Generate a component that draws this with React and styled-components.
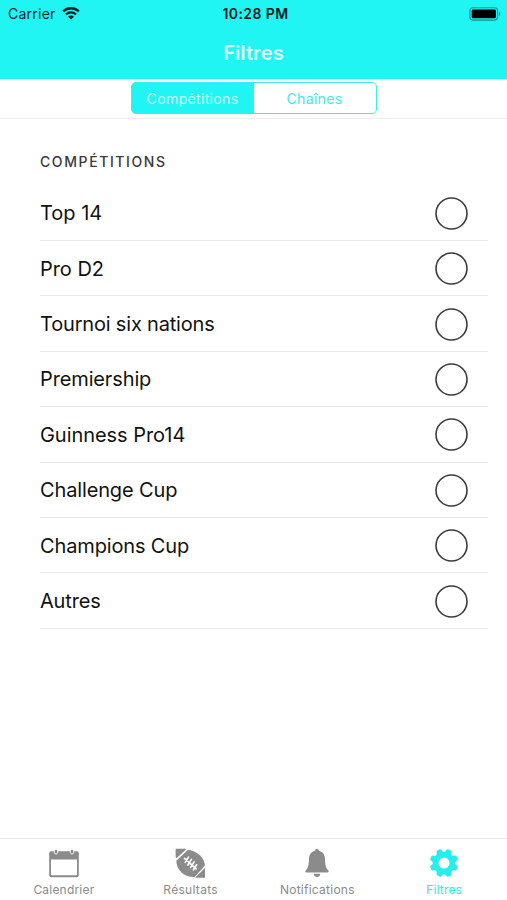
import React, { useState } from "react";
import styled, { createGlobalStyle } from "styled-components";

const GlobalStyle = createGlobalStyle`
  * {
    box-sizing: border-box;
  }

  body {
    margin: 0;
    background: #ffffff;
    font-family: Inter, "Liberation Sans", sans-serif;
  }

  button {
    font-family: inherit;
    border: none;
    padding: 0;
    background: transparent;
  }
`;

const Screen = styled.div`
  display: flex;
  flex-direction: column;
  width: 507px;
  height: 900px;
  background: #ffffff;
  overflow: hidden;
`;

const Header = styled.header`
  flex-shrink: 0;
  height: 79px;
  background: #20f5f4;
`;

const StatusBar = styled.div`
  display: grid;
  grid-template-columns: 1fr auto 1fr;
  align-items: center;
  height: 27px;
  padding: 0 6px 0 8px;
  color: #05282b;
`;

const Carrier = styled.div`
  display: flex;
  align-items: center;
  gap: 6px;
  font-size: 14px;
  letter-spacing: 0.25px;
`;

const Clock = styled.div`
  padding-left: 2px;
  font-size: 14px;
  font-weight: 600;
  letter-spacing: 0.4px;
  color: #032022;
`;

const BatteryIcon = styled.svg`
  justify-self: end;
`;

const Title = styled.h1`
  margin: 0;
  padding-top: 13px;
  font-size: 20.3px;
  line-height: 26px;
  font-weight: 600;
  text-align: center;
  letter-spacing: 0;
  color: #d9fffe;
`;

const SegmentBar = styled.div`
  display: flex;
  justify-content: center;
  flex-shrink: 0;
  height: 40px;
  padding-top: 3px;
  border-bottom: 1px solid #ededed;
`;

const Segments = styled.div`
  display: flex;
  width: 246px;
  height: 32px;
  border: 1.5px solid #36eeee;
  border-radius: 5px;
  background: #20f5f4;
  overflow: hidden;
`;

const Segment = styled.button`
  flex: 1;
  padding-top: 1px;
  font-size: 14.2px;
  letter-spacing: 0.25px;
  background: ${({ $active }) => ($active ? "#20f5f4" : "#ffffff")};
  color: ${({ $active }) => ($active ? "#c4fffe" : "#45e9e9")};
`;

const Content = styled.main`
  flex: 1;
  padding: 33px 19px 0 40px;
`;

const SectionTitle = styled.h2`
  margin: 0;
  height: 33.6px;
  font-size: 14px;
  line-height: 20px;
  font-weight: 500;
  letter-spacing: 1.6px;
  text-transform: uppercase;
  color: #3a3a3a;
`;

const Row = styled.div`
  display: flex;
  align-items: center;
  justify-content: space-between;
  height: 55.4px;
  padding: 1px 20px 0 0;
  border-bottom: 1px solid #e7e7e7;
`;

const RowLabel = styled.span`
  font-size: 20px;
  letter-spacing: ${({ $spacing }) => $spacing || "-0.18px"};
  color: #111111;
`;

const Circle = styled.circle`
  fill: ${({ $checked }) => ($checked ? "#20f5f4" : "#ffffff")};
  stroke: #3c3c3c;
  stroke-width: 1.6px;
`;

const Radio = styled.button`
  display: flex;
  width: 33px;
  height: 33px;
`;

const TabBar = styled.nav`
  display: grid;
  grid-template-columns: repeat(4, 1fr);
  flex-shrink: 0;
  height: 62px;
  border-top: 1px solid #e9e9e9;
`;

const Tab = styled.button`
  display: flex;
  flex-direction: column;
  align-items: center;
  padding: 8px 0 0 1px;
  color: ${({ $active }) => ($active ? "#25eeed" : "#8b8b8b")};
`;

const TabLabel = styled.span`
  margin-top: 3px;
  font-size: 12px;
  line-height: 15px;
  letter-spacing: ${({ $spacing }) => $spacing};
`;

const WifiIcon = () => (
  <svg width="18" height="13" viewBox="0 0 18 13" fill="none" stroke="#032022">
    <path d="M1.2 4.4C5.5.2 12.5.2 16.8 4.4" strokeWidth="2.4" />
    <path d="M4 7.4c2.8-2.7 7.2-2.7 10 0" strokeWidth="2.1" />
    <path d="M9 12.6 6 9.7c1.7-1.5 4.3-1.5 6 0z" fill="#032022" stroke="none" />
  </svg>
);

const Battery = () => (
  <BatteryIcon width="32" height="14" viewBox="0 0 32 14">
    <rect x=".9" y=".7" width="27.7" height="12.4" rx="3" fill="none" stroke="#138f94" strokeWidth="1.1" />
    <rect x="2.7" y="2.4" width="24.2" height="8.8" rx="1.3" fill="#000000" />
    <path d="M30 4.8c1.7.6 1.7 3.6 0 4.2z" fill="#138f94" />
  </BatteryIcon>
);

const CalendarIcon = () => (
  <svg width="32" height="32" viewBox="0 0 32 32">
    <path
      fillRule="evenodd"
      d="M3.200 4.200h25.600a2 2 0 0 1 2 2v22a2 2 0 0 1-2 2H3.200a2 2 0 0 1-2-2v-22a2 2 0 0 1 2-2zM3 12.500v14.700a1.100 1.100 0 0 0 1.100 1.100h23.800a1.100 1.100 0 0 0 1.100-1.100V12.500z"
      fill="currentColor"
    />
    <g fill="currentColor" stroke="#ffffff" strokeWidth=".9">
      <rect x="6.300" y="2.200" width="3.400" height="4.800" rx="1.700" />
      <rect x="22.300" y="2.200" width="3.400" height="4.800" rx="1.700" />
    </g>
  </svg>
);

const BallIcon = () => (
  <svg width="32" height="32" viewBox="1 0 32 32">
    <g fill="currentColor">
      <path d="M1.600 1.800h8.700c.9 0 1.300.4 1.700.8L2.500 11.200c-.6-.7-.9-1.500-.9-2.300z" />
      <path d="M14 2.800c9.800 1.700 16.200 7.800 16.900 15.600L20.800 29.900C9.500 30.300 2.600 23 2.300 13.700z" />
      <path d="M31 20.900v9.800h-8.300c-.6 0-1-.1-1.300-.500z" />
    </g>
    <g stroke="#ffffff" strokeWidth="1.700" strokeLinecap="round">
      <path d="m10.500 11.300 11.700 10.600M14.500 10.100l-3.300 5.300M17.400 12.400l-3.500 5.600M20.100 14.900l-3.500 5.600M22.700 17.600l-3.300 5.300" />
    </g>
  </svg>
);

const BellIcon = () => (
  <svg width="32" height="32" viewBox="0 0 32 32" fill="currentColor">
    <path d="M16 1.700c1.200 0 1.800.8 1.800 2 4 .9 6.100 4 6.200 7.900.2 6.700.7 9.300 3.300 11.900.7.700.4 1.900-.8 1.900h-21c-1.200 0-1.500-1.200-.8-1.900C7.300 20.900 7.800 18.300 8 11.600c.1-3.900 2.200-7 6.200-7.900 0-1.200.6-2 1.800-2z" />
    <path d="M12.700 26.700h6.600c-.3 2.100-1.500 3.200-3.300 3.200s-3-1.100-3.300-3.200z" />
  </svg>
);

const teeth = [22.5, 67.5, 112.5, 157.5, 202.5, 247.5, 292.5, 337.5];

const GearIcon = () => (
  <svg width="32" height="32" viewBox="0 0 32 32" fill="currentColor">
    {teeth.map((angle) => (
      <path
        key={angle}
        d="M11.8 9l1.5-6.1q.4-1.200 1.800-1.200h1.800q1.400 0 1.800 1.200L20.200 9z"
        transform={`rotate(${angle} 16 16)`}
      />
    ))}
    <circle cx="16" cy="16" r="8.400" fill="none" stroke="currentColor" strokeWidth="5.800" />
  </svg>
);

const competitions = [
  { name: "Top 14", spacing: "0px" },
  { name: "Pro D2", spacing: "-0.05px" },
  { name: "Tournoi six nations" },
  { name: "Premiership", spacing: "-0.13px" },
  { name: "Guinness Pro14", spacing: "-0.05px" },
  { name: "Challenge Cup", spacing: "-0.14px" },
  { name: "Champions Cup", spacing: "-0.14px" },
  { name: "Autres" },
];

const tabs = [
  { name: "Calendrier", icon: CalendarIcon, spacing: "0.2px" },
  { name: "Résultats", icon: BallIcon, spacing: "0.3px" },
  { name: "Notifications", icon: BellIcon, spacing: "0.25px" },
  { name: "Filtres", icon: GearIcon, spacing: "0.2px" },
];

const App = () => {
  const [segment, setSegment] = useState("Compétitions");
  const [selected, setSelected] = useState([]);
  const [tab, setTab] = useState("Filtres");

  const toggle = (name) =>
    setSelected((list) =>
      list.includes(name) ? list.filter((item) => item !== name) : [...list, name]
    );

  return (
    <Screen>
      <GlobalStyle />
      <Header>
        <StatusBar>
          <Carrier>
            Carrier
            <WifiIcon />
          </Carrier>
          <Clock>10:28 PM</Clock>
          <Battery />
        </StatusBar>
        <Title>Filtres</Title>
      </Header>
      <SegmentBar>
        <Segments>
          {["Compétitions", "Chaînes"].map((name) => (
            <Segment key={name} $active={segment === name} onClick={() => setSegment(name)}>
              {name}
            </Segment>
          ))}
        </Segments>
      </SegmentBar>
      <Content>
        <SectionTitle>Compétitions</SectionTitle>
        {competitions.map(({ name, spacing }) => (
          <Row key={name}>
            <RowLabel $spacing={spacing}>{name}</RowLabel>
            <Radio aria-label={name} onClick={() => toggle(name)}>
              <svg width="33" height="33" viewBox="0 0 33 33">
                <Circle cx="16.5" cy="16.5" r="15.5" $checked={selected.includes(name)} />
              </svg>
            </Radio>
          </Row>
        ))}
      </Content>
      <TabBar>
        {tabs.map(({ name, icon: Icon, spacing }) => (
          <Tab key={name} $active={tab === name} onClick={() => setTab(name)}>
            <Icon />
            <TabLabel $spacing={spacing}>{name}</TabLabel>
          </Tab>
        ))}
      </TabBar>
    </Screen>
  );
};

export default App;
